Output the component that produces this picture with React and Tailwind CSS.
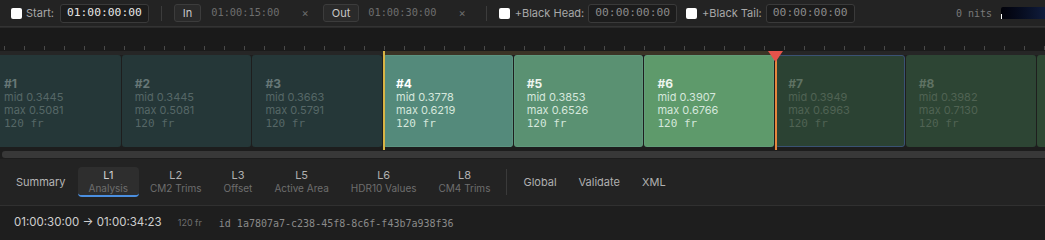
import React from "react";

const clips = [
  { n: 1, mid: "0.3445", max: "0.5081", bg: "bg-[#253738]", tone: "dim" },
  { n: 2, mid: "0.3445", max: "0.5081", bg: "bg-[#253738]", tone: "dim" },
  { n: 3, mid: "0.3663", max: "0.5791", bg: "bg-[#253738]", tone: "dim" },
  { n: 4, mid: "0.3778", max: "0.6219", bg: "bg-[#548a7b]", tone: "lit" },
  { n: 5, mid: "0.3853", max: "0.6526", bg: "bg-[#5a9172]", tone: "lit" },
  { n: 6, mid: "0.3907", max: "0.6766", bg: "bg-[#5e9a6b]", tone: "lit" },
  { n: 7, mid: "0.3949", max: "0.6963", bg: "bg-[#2b4233]", tone: "dimg", sel: true },
  { n: 8, mid: "0.3982", max: "0.7130", bg: "bg-[#2d4534]", tone: "dimg" },
];

const tabs = [
  ["L1", "Analysis"],
  ["L2", "CM2 Trims"],
  ["L3", "Offset"],
  ["L5", "Active Area"],
  ["L6", "HDR10 Values"],
  ["L8", "CM4 Trims"],
];

const mono = "font-['DejaVu_Sans_Mono',monospace]";

function Check() {
  return <span className="block w-[11px] h-[11px] rounded-[2px] bg-white shrink-0" />;
}

function TimeBox({ value, bright }) {
  return (
    <span
      className={`h-[19px] px-[6px] flex items-center rounded-[3px] border border-[#3a3a3a] bg-[#1c1c1c] text-[11.3px] ${mono} ${
        bright ? "text-[#e6e6e6]" : "text-[#8a8a8a]"
      }`}
    >
      {value}
    </span>
  );
}

function Btn({ children }) {
  return (
    <span className="h-[18px] px-[8px] flex items-center rounded-[3px] border border-[#3c3c3c] bg-[#2a2a2a] text-[11px] text-[#c8c8c8]">
      {children}
    </span>
  );
}

function Clip({ c }) {
  const head = c.tone === "lit" ? (c.n === 4 ? "text-white" : "text-[#eef5ef]") : c.tone === "dim" ? "text-[#687777]" : "text-[#5f7263]";
  const body = c.tone === "lit" ? "text-[#d5e7dc]" : c.tone === "dim" ? "text-[#566767]" : "text-[#506353]";
  return (
    <div
      className={`w-[129.7px] shrink-0 h-full rounded-[3px] ${c.bg} flex flex-col justify-center pl-3 pt-[5px] border ${
        c.sel ? "border-[#3a5274]" : c.tone === "lit" ? "border-[#6aa38c]/40" : "border-transparent"
      }`}
    >
      <div className={`text-[12px] font-bold leading-[14px] ${head}`}>#{c.n}</div>
      <div className={`text-[11px] leading-[13px] ${body}`}>mid {c.mid}</div>
      <div className={`text-[11px] leading-[13px] ${body}`}>max {c.max}</div>
      <div className={`text-[11px] leading-[13px] ${mono} ${body}`}>120 fr</div>
    </div>
  );
}

export default function App() {
  const ticks = Array.from({ length: 53 }, (_, i) => i);
  return (
    <div className="w-[1045px] h-[240px] overflow-hidden bg-[#232323] font-['Inter',sans-serif] select-none">
      {/* toolbar */}
      <div className="h-[27px] flex items-center pl-[11px] text-[11px] text-[#a8a8a8] border-b border-[#333]">
        <Check />
        <span className="ml-[4px] mr-[6px]">Start:</span>
        <TimeBox value="01:00:00:00" bright />
        <span className="w-px h-[15px] bg-[#3c3c3c] ml-[12px] mr-[12px]" />
        <Btn>In</Btn>
        <span className={`ml-[10px] text-[10.3px] ${mono} text-[#6e6e6e]`}>01:00:15:00</span>
        <span className="ml-[22px] text-[#6e6e6e]">×</span>
        <span className="ml-[14px]"><Btn>Out</Btn></span>
        <span className={`ml-[9px] text-[10.3px] ${mono} text-[#6e6e6e]`}>01:00:30:00</span>
        <span className="ml-[22px] text-[#6e6e6e]">×</span>
        <span className="w-px h-[15px] bg-[#3c3c3c] ml-[20px] mr-[12px]" />
        <Check />
        <span className="ml-[5px] mr-[4px]">+Black Head:</span>
        <TimeBox value="00:00:00:00" />
        <span className="ml-[9px]"><Check /></span>
        <span className="ml-[5px] mr-[4px]">+Black Tail:</span>
        <TimeBox value="00:00:00:00" />
        <span className={`ml-auto text-[10px] ${mono} text-[#7a7a7a]`}>0 nits</span>
        <span className="ml-[9px] w-[44px] h-[12px] rounded-l-[2px] bg-gradient-to-r from-[#02030a] to-[#101c3c] flex items-end">
          <span className="w-px h-[5px] bg-white" />
        </span>
      </div>

      {/* timeline */}
      <div className="relative bg-[#1e1e1e]">
        <div className="h-[24px] bg-[#1a1a1a] flex items-end pl-[4px] gap-[19px] border-t border-[#2a2a2a]">
          {ticks.map((t) => (
            <span key={t} className="w-px h-[4px] bg-[#4a4a4a] shrink-0 mb-px" />
          ))}
        </div>
        <div className="h-[4px] flex bg-[#262626]">
          <span className="w-[384px]" />
          <span className="w-[392px] bg-[#3b3426]" />
        </div>
        <div className="h-[92px] flex gap-px ml-[-9px]">
          {clips.map((c) => (
            <Clip key={c.n} c={c} />
          ))}
          <div className="w-[129.7px] shrink-0 h-full rounded-[3px] bg-[#2f4934]" />
        </div>
        <div className="h-[12px] flex items-center pt-[2px] pl-[2px] bg-[#1d1d1d]">
          <span className="w-full h-[7px] rounded-l-[3px] bg-[#383838]" />
        </div>

        {/* in / out markers */}
        <span className="absolute left-[383px] top-[24px] w-[2px] h-[99px] bg-[#d8b445]" />
        <span className="absolute left-[775px] top-[24px] w-[2px] h-[99px] bg-[#e6863e]" />
        <svg className="absolute left-[768px] top-[24px]" width="15" height="11" viewBox="0 0 15 11">
          <path d="M0 0 H15 L7.5 11 Z" fill="#e5534b" />
        </svg>
      </div>

      {/* tabs */}
      <div className="h-[47px] flex items-center pl-[16px] bg-[#232323] border-b border-[#303030]">
        <span className="text-[11px] text-[#b5b5b5] mr-[12px]">Summary</span>
        {tabs.map(([k, v], i) => (
          <div
            key={k}
            className={`h-[30px] flex flex-col items-center justify-center px-[11px] leading-[13px] rounded-[4px] ${
              i === 0 ? "bg-[#2e2e2e] border-b-2 border-[#4b8fe0] pt-[2px] text-[#d0d0d0]" : "text-[#b0b0b0]"
            }`}
          >
            <span className="text-[11px]">{k}</span>
            <span className="text-[10px] text-[#6e6e6e]">{v}</span>
          </div>
        ))}
        <span className="w-px h-[26px] bg-[#3a3a3a] ml-[5px] mr-[16px]" />
        <span className="text-[11px] text-[#b0b0b0]">Global</span>
        <span className="text-[11px] text-[#b0b0b0] ml-[22px]">Validate</span>
        <span className="text-[11px] text-[#b0b0b0] ml-[22px]">XML</span>
      </div>

      {/* info */}
      <div className="h-[34px] flex items-center pl-[14px] bg-[#1e1e1e]">
        <span className="text-[11.5px] text-[#cfcfcf]">01:00:30:00 → 01:00:34:23</span>
        <span className="ml-[16px] text-[9px] text-[#6e6e6e]">120 fr</span>
        <span className={`ml-[17px] text-[10px] ${mono} text-[#8a8a8a]`}>id 1a7807a7-c238-45f8-8c6f-f43b7a938f36</span>
      </div>
    </div>
  );
}
